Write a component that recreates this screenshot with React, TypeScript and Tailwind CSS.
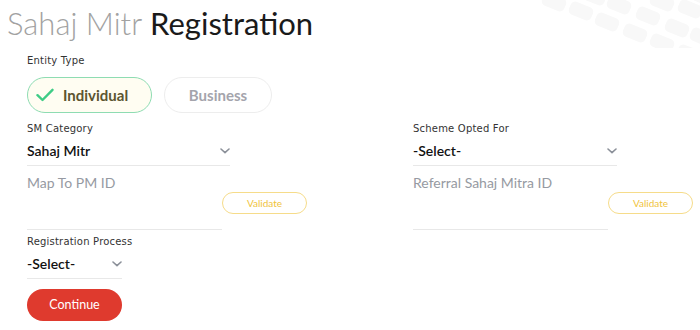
import React from "react";

const shapes: [number, number][] = [
  [554, 2], [581, 11], [607, 22], [635, 33], [662, 43], [689, 54],
  [594, -4], [619, 5], [648, 16], [677, 28], [702, 37],
  [634, -10], [662, 2], [690, 9],
  [704, -3],
];

function Pattern() {
  return (
    <svg
      className="absolute top-0 right-0"
      width="170"
      height="48"
      viewBox="530 0 170 48"
    >
      {shapes.map(([cx, cy], i) => (
        <rect
          key={i}
          x={cx - 12}
          y={cy - 7}
          width="24"
          height="14"
          rx="5"
          fill="#f8f8f8"
          transform={`rotate(22 ${cx} ${cy})`}
        />
      ))}
    </svg>
  );
}

function Chevron() {
  return (
    <svg width="10" height="6" viewBox="0 0 10 6" className="mt-[7px] shrink-0">
      <path d="M1 1 L5 4.6 L9 1" fill="none" stroke="#8b9099" strokeWidth="1.6" strokeLinecap="round" strokeLinejoin="round" />
    </svg>
  );
}

function Label({ children }: { children: React.ReactNode }) {
  return (
    <div className="font-['DejaVu_Sans',sans-serif] text-[10px] leading-[14px] text-[#333] tracking-[0.2px]">
      {children}
    </div>
  );
}

function Select({ value, w }: { value: string; w: string }) {
  return (
    <div className={`mt-[5px] h-[25px] ${w} border-b border-[#e8e8e8] flex items-start justify-between`}>
      <span className="text-[14px] leading-[20px] font-semibold text-[#111]">{value}</span>
      <Chevron />
    </div>
  );
}

function InputValidate({ placeholder }: { placeholder: string }) {
  return (
    <div className="flex items-start">
      <div className="w-[195px] h-[64px] border-b border-[#e8e8e8] pt-[4px]">
        <span className="text-[14px] leading-[20px] text-[#969aa2]">{placeholder}</span>
      </div>
      <button className="mt-[26px] w-[85px] h-[22px] rounded-full border border-[#f6dc8a] text-[10px] leading-[20px] text-[#f0c33c] bg-white">
        Validate
      </button>
    </div>
  );
}

export default function App() {
  return (
    <div className="relative w-[700px] h-[330px] bg-white overflow-hidden font-['Lato','Open_Sans',sans-serif]">
      <Pattern />
      <h1 className="relative pl-[7px] pt-[3px] text-[31px] leading-[40px]">
        <span className="font-light text-[#a2a2a2]">Sahaj Mitr</span>{" "}
        <span className="font-normal text-[#1a1a1a]">Registration</span>
      </h1>
      <div className="relative pl-[27px] pr-[7px]">
        <div className="mt-[11px]">
          <Label>Entity Type</Label>
        </div>
        <div className="mt-[9px] flex gap-[12px]">
          <div className="w-[125px] h-[36px] rounded-full border border-[#8edcb2] bg-[#fffdf2] flex items-center pl-[8px] gap-[9px]">
            <svg width="18" height="14" viewBox="0 0 18 14">
              <path d="M1.5 7.2 L6.5 12 L16.5 1.8" fill="none" stroke="#3fcc86" strokeWidth="2.4" strokeLinecap="round" strokeLinejoin="round" />
            </svg>
            <span className="text-[15px] font-bold text-[#5c5530]">Individual</span>
          </div>
          <div className="w-[108px] h-[36px] rounded-full border border-[#ededed] bg-white flex items-center justify-center">
            <span className="text-[15px] font-bold text-[#a4a4ac]">Business</span>
          </div>
        </div>
        <div className="mt-[9px] grid grid-cols-[386px_280px]">
          <div>
            <Label>SM Category</Label>
            <Select value="Sahaj Mitr" w="w-[203px]" />
            <InputValidate placeholder="Map To PM ID" />
          </div>
          <div>
            <Label>Scheme Opted For</Label>
            <Select value="-Select-" w="w-[204px]" />
            <InputValidate placeholder="Referral Sahaj Mitra ID" />
          </div>
        </div>
        <div className="mt-[5px]">
          <Label>Registration Process</Label>
          <Select value="-Select-" w="w-[95px]" />
        </div>
        <button className="mt-[10px] w-[95px] h-[32px] rounded-full bg-[#df3a2e] text-white text-[12.5px] leading-[32px]">
          Continue
        </button>
      </div>
    </div>
  );
}
